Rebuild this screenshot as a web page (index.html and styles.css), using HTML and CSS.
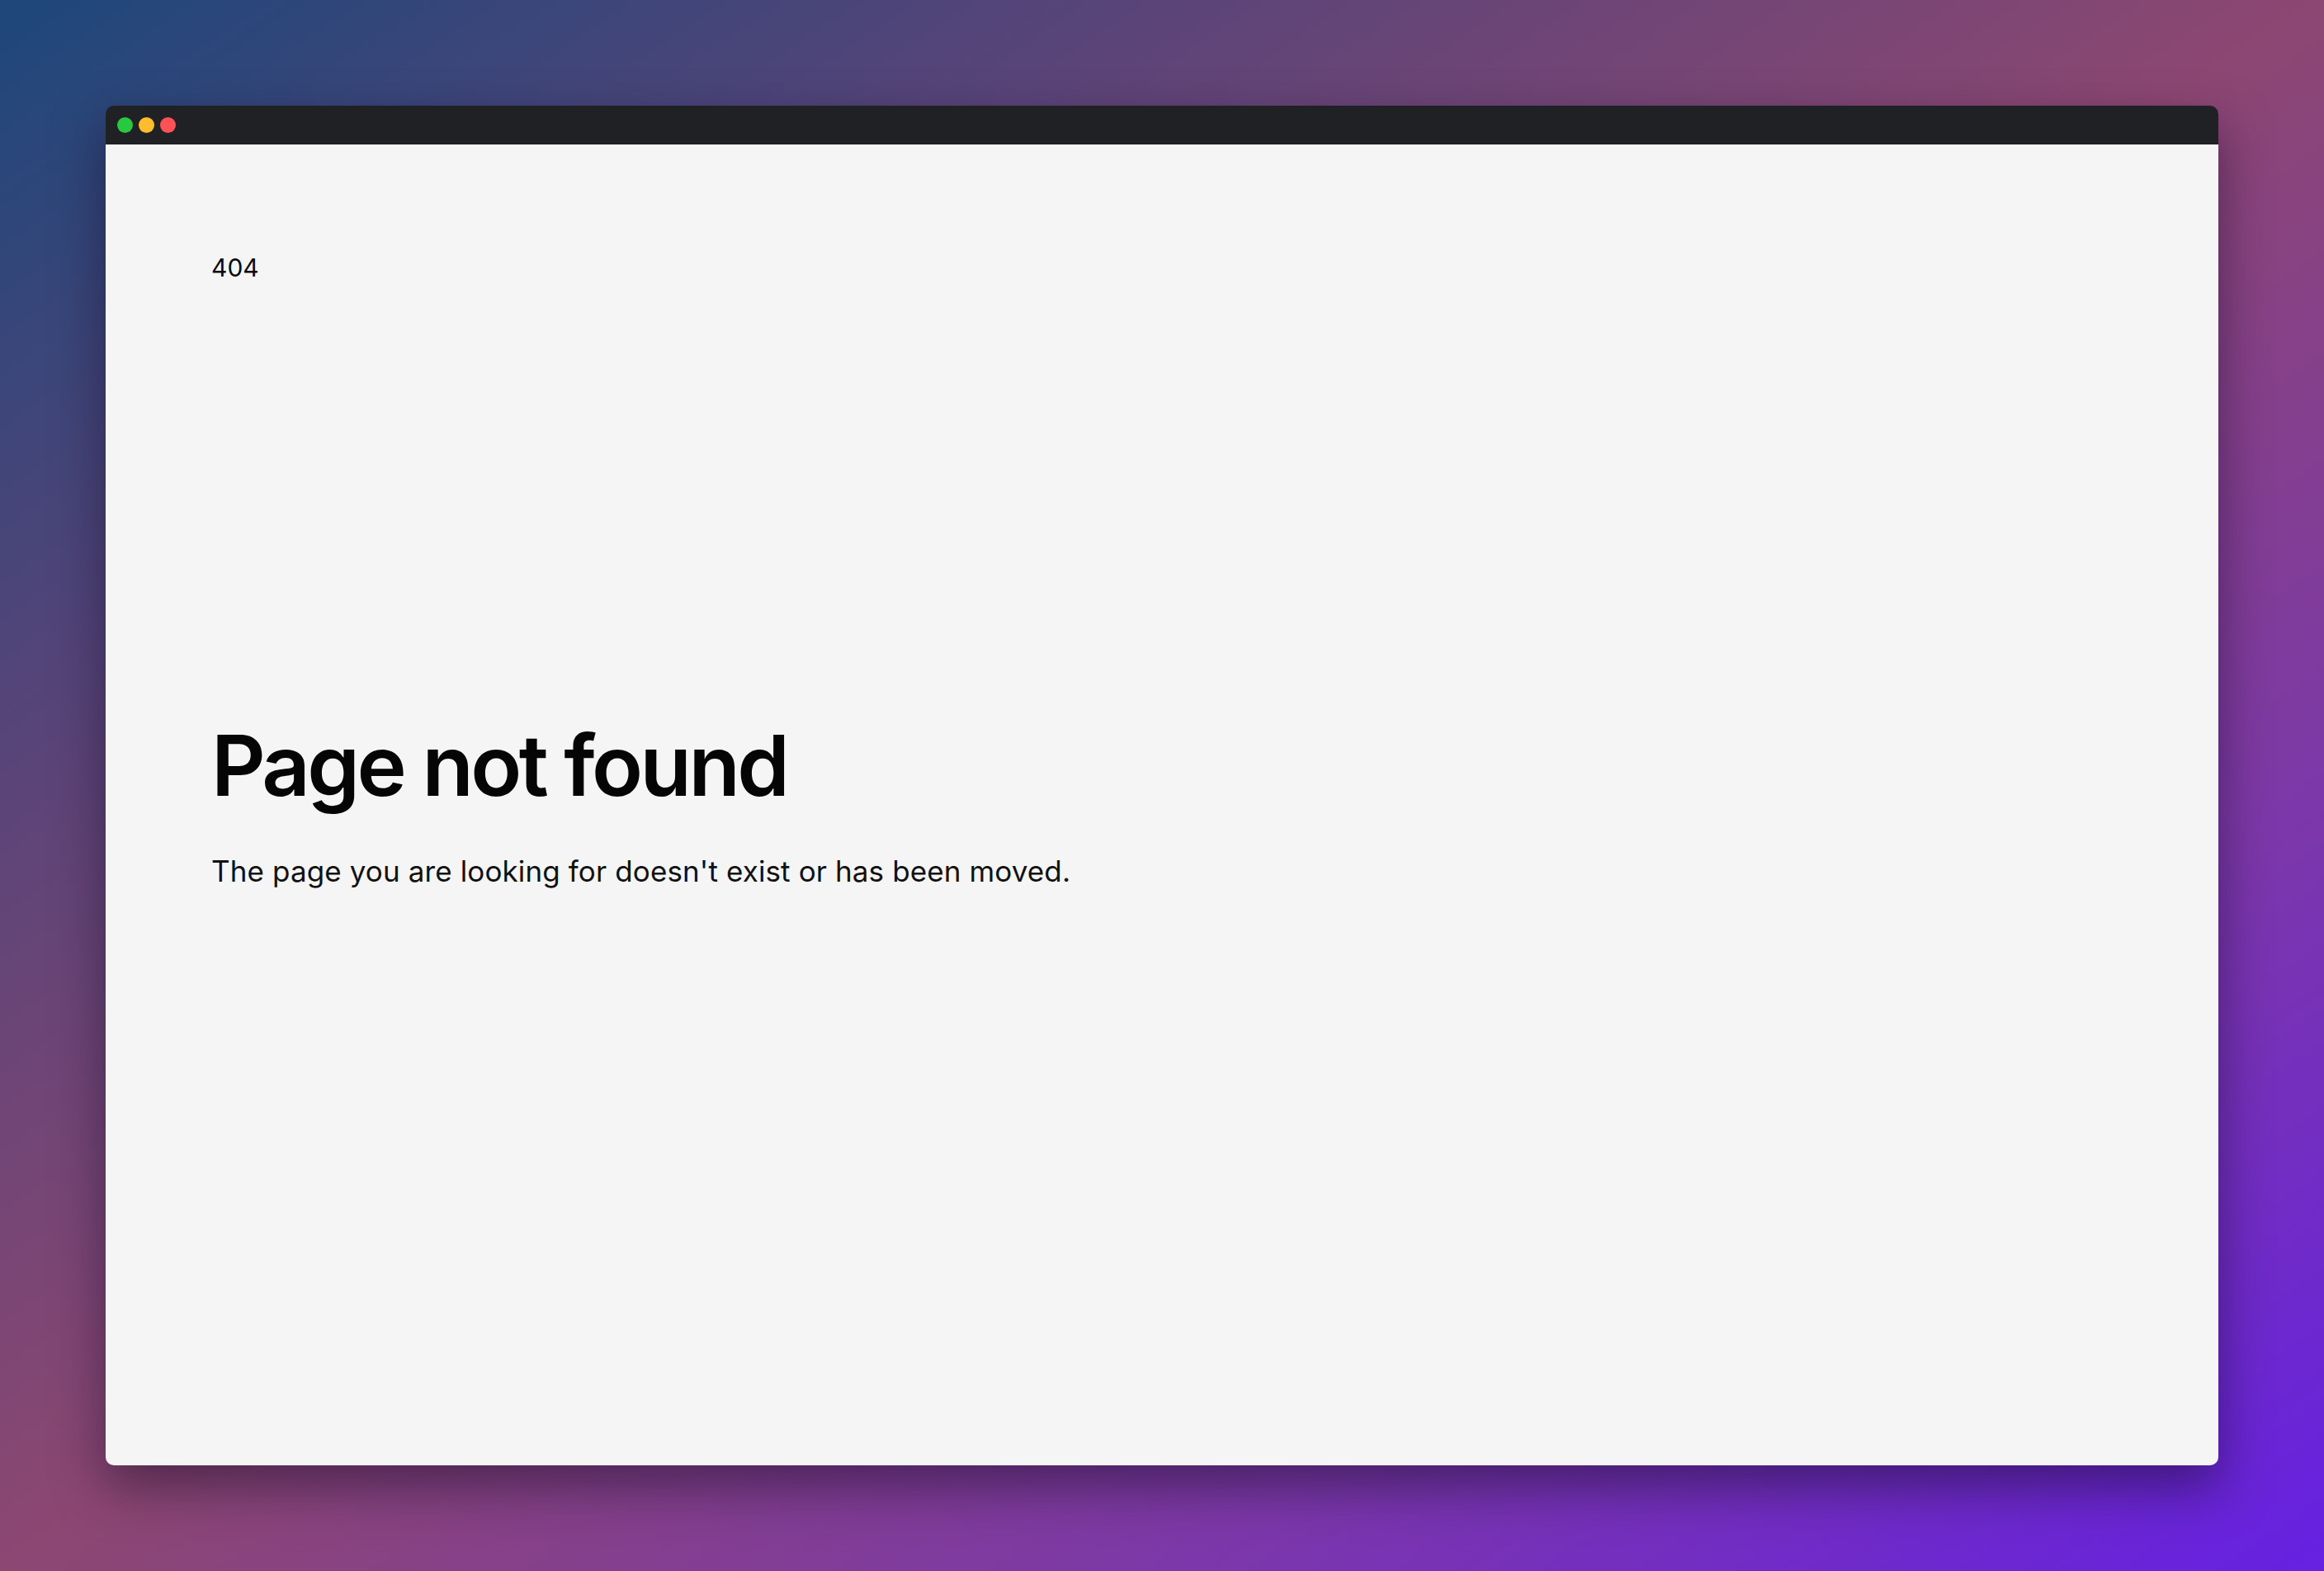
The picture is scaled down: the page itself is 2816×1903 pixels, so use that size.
FILE: index.html
```html
<!DOCTYPE html>
<html lang="en">
<head>
<meta charset="utf-8">
<title>Page not found</title>
<link rel="stylesheet" href="styles.css">
</head>
<body>
<div class="stage">
  <div class="window">
    <div class="titlebar">
      <span class="dot dot-green"></span>
      <span class="dot dot-yellow"></span>
      <span class="dot dot-red"></span>
    </div>
    <main class="content">
      <p class="code">404</p>
      <section class="message">
        <h1 class="title">Page not found</h1>
        <p class="desc">The page you are looking for doesn't exist or has been moved.</p>
      </section>
    </main>
  </div>
</div>
</body>
</html>
```
FILE: styles.css
```css
html, body {
  margin: 0;
  padding: 0;
  width: 2816px;
  height: 1903px;
  overflow: hidden;
}
body {
  font-family: Inter, "Liberation Sans", sans-serif;
}
.stage {
  width: 2816px;
  height: 1903px;
  box-sizing: border-box;
  padding: 128px 128px 0 128px;
  background: linear-gradient(to bottom right, #1d477a 0%, #5a4478 25%, #8c4772 50%, #7c38a8 75%, #6520e2 100%);
}
.window {
  width: 2560px;
  height: 1647px;
  border-radius: 10px;
  overflow: hidden;
  display: flex;
  flex-direction: column;
  box-shadow: 0 26px 60px rgba(20, 10, 40, 0.5);
}
.titlebar {
  height: 47px;
  flex: none;
  background: #202124;
  display: flex;
  align-items: center;
  gap: 7px;
  padding-left: 14px;
}
.dot {
  width: 19px;
  height: 19px;
  border-radius: 50%;
}
.dot-green { background: #28c840; }
.dot-yellow { background: #febc2e; }
.dot-red { background: #ff5257; }
.content {
  flex: 1;
  background: #f5f5f5;
  padding: 131px 128px 0 128px;
  color: #0a0a0a;
}
.code {
  margin: 0;
  font-size: 30px;
  line-height: 36px;
  font-weight: 400;
}
.message {
  margin-top: 529px;
}
.title {
  margin: 0;
  font-size: 102px;
  line-height: 112px;
  font-weight: 600;
  letter-spacing: -0.035em;
  color: #050505;
}
.desc {
  margin: 48px 0 0 0;
  font-size: 35px;
  line-height: 48px;
  font-weight: 400;
  letter-spacing: 0.12px;
  color: #111;
}
```
